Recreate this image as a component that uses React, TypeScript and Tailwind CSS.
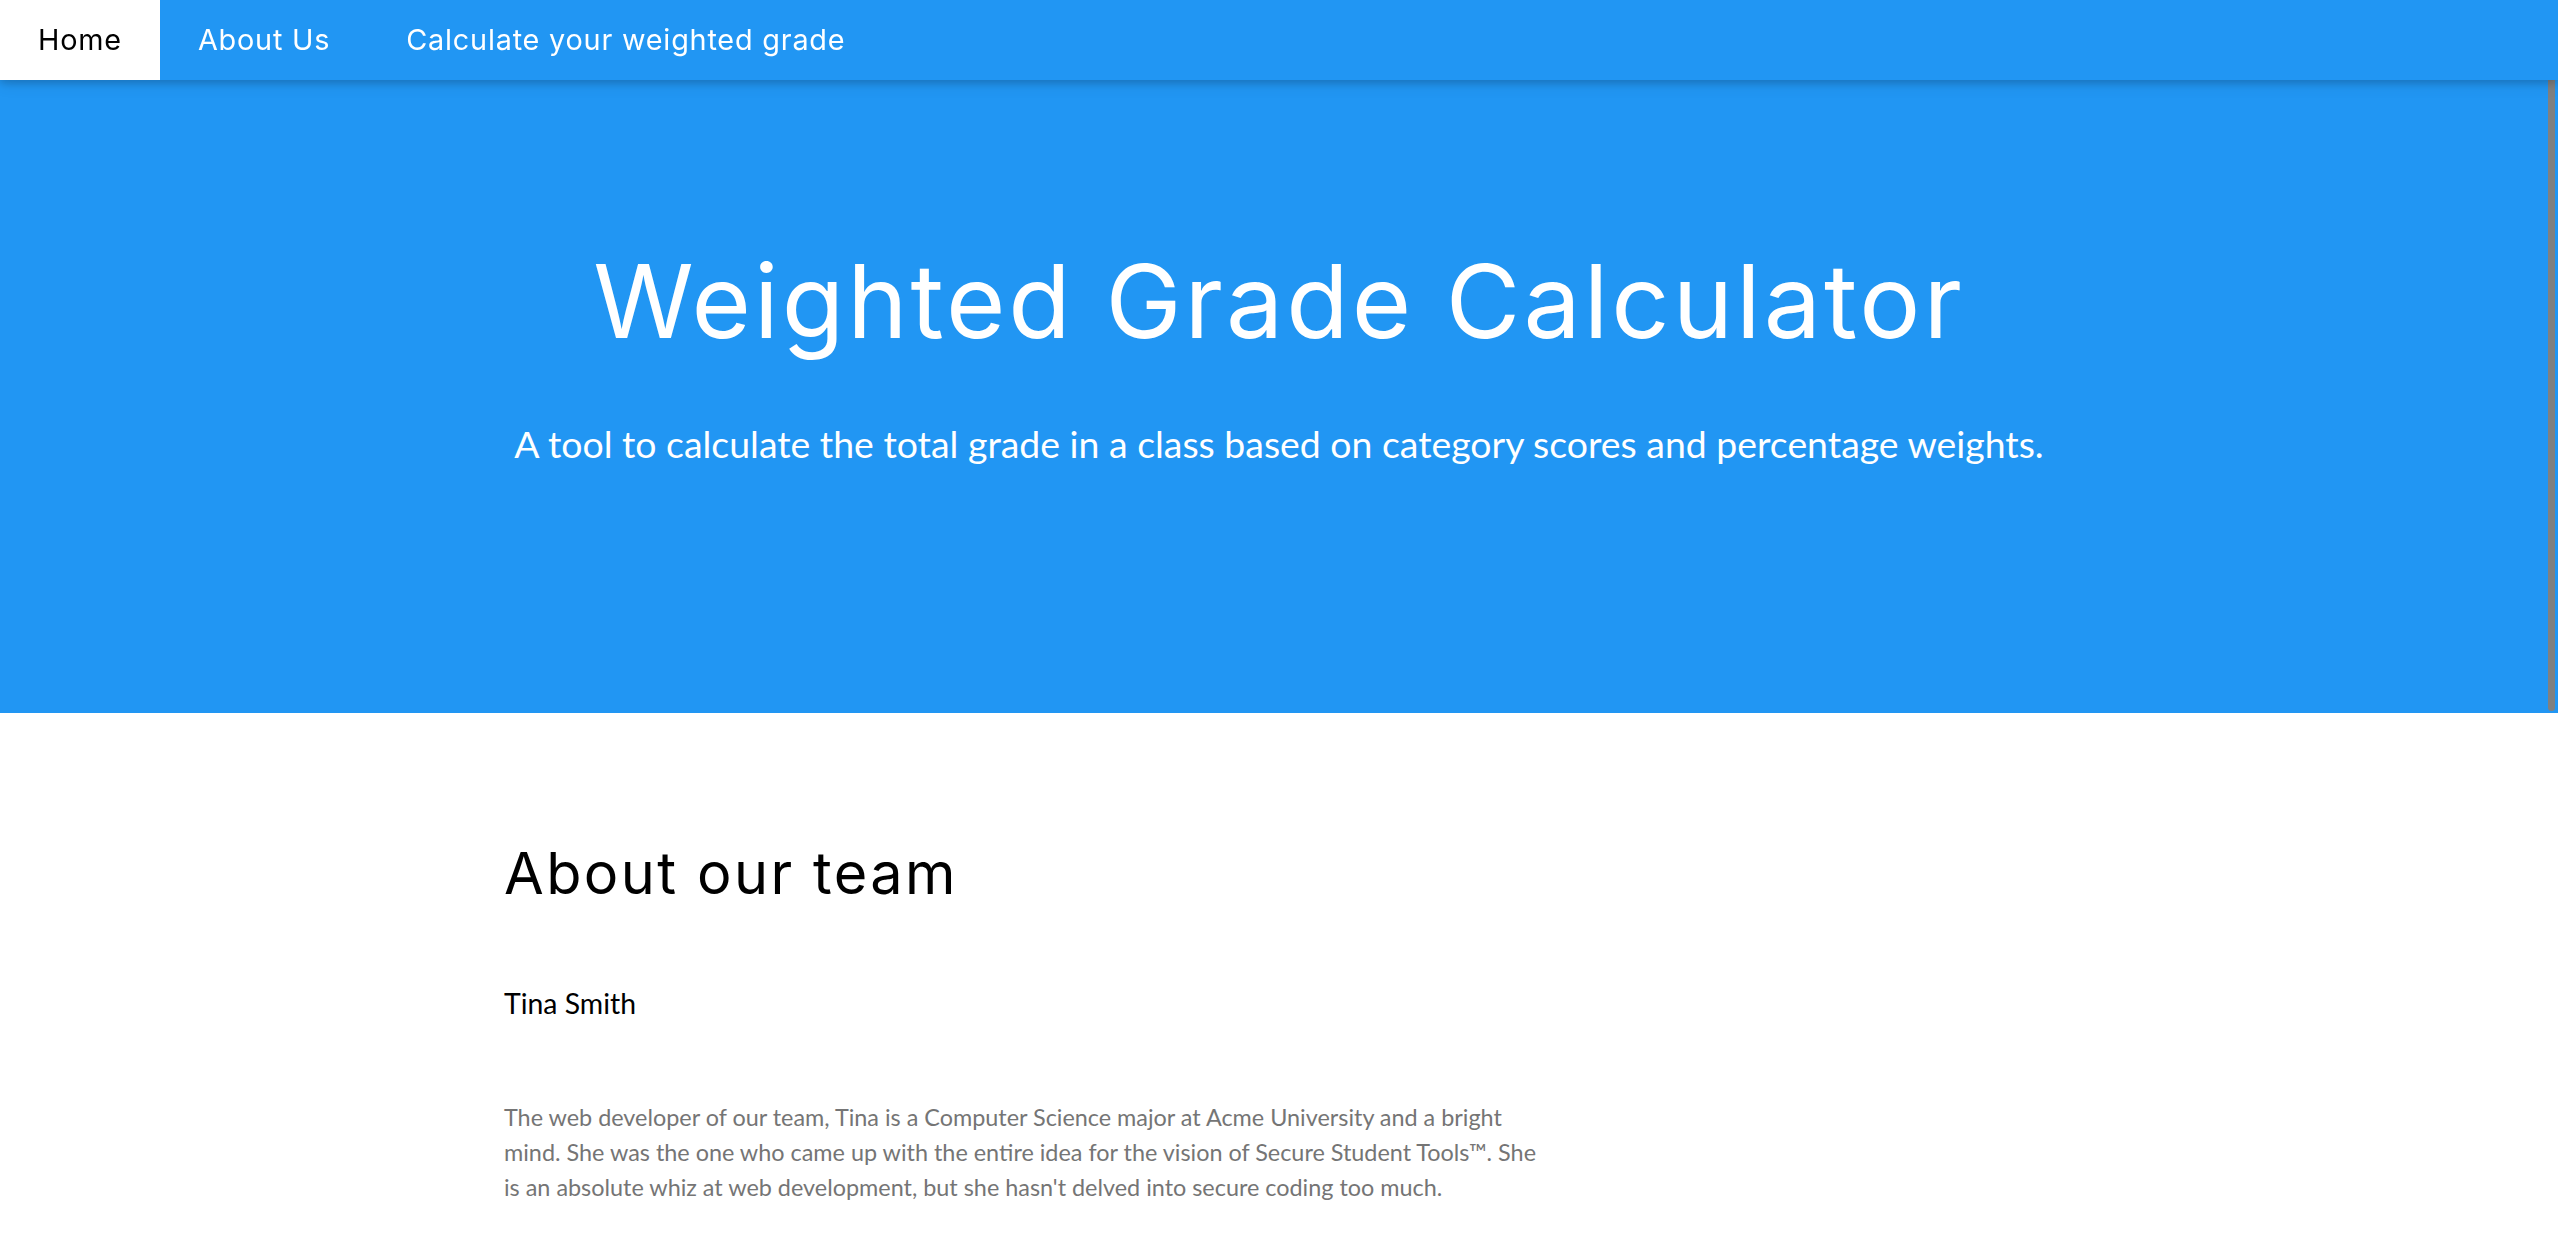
import React from "react";

const navItems = ["Home", "About Us", "Calculate your weighted grade"];

export default function App() {
  return (
    <div className="relative h-screen overflow-hidden bg-white font-['Lato',sans-serif]">
      {/* ── Top bar ── */}
      <nav className="relative z-10 flex h-[80px] bg-[#2196F3] text-[28.8px] tracking-[0.8px] font-['Inter',sans-serif] shadow-[0_3px_8px_0_rgba(0,0,0,0.16),0_3px_16px_0_rgba(0,0,0,0.12)]">
        {navItems.map((item, i) => (
          <a
            key={item}
            className={`flex items-center px-[38px] ${i === 0 ? "bg-white text-black" : "text-white"}`}
          >
            {item}
          </a>
        ))}
      </nav>

      {/* ── Header ── */}
      <header className="flex h-[633px] flex-col items-center bg-[#2196F3] text-white">
        <h1 className="mt-[170px] font-['Inter',sans-serif] text-[102px] leading-none tracking-[3px] font-normal">
          Weighted Grade Calculator
        </h1>
        <p className="mt-[73px] text-[37.4px] leading-none">
          A tool to calculate the total grade in a class based on category scores and percentage weights.
        </p>
      </header>

      {/* ── About ── */}
      <section className="pt-[132px]">
        <div className="mx-auto w-[1576px] px-[13px]">
          <div className="w-[1034px]">
            <h1 className="font-['Inter',sans-serif] text-[57.6px] leading-none tracking-[2.4px] text-black">About our team</h1>
            <h5 className="mt-[86px] text-[28.4px] leading-none text-black">Tina Smith</h5>
            <p className="mt-[83px] text-[23.4px] leading-[35px] text-[#757575]">
              The web developer of our team, Tina is a Computer Science major at Acme University and a bright mind. She was the one who came up with the entire idea for the vision of Secure Student Tools™. She is an absolute whiz at web development, but she hasn't delved into secure coding too much.
            </p>
          </div>
        </div>
      </section>

      {/* scrollbar thumb */}
      <div className="fixed right-[3px] top-[2px] h-[709px] w-[7px] rounded-full bg-[#808080]" />
    </div>
  );
}
